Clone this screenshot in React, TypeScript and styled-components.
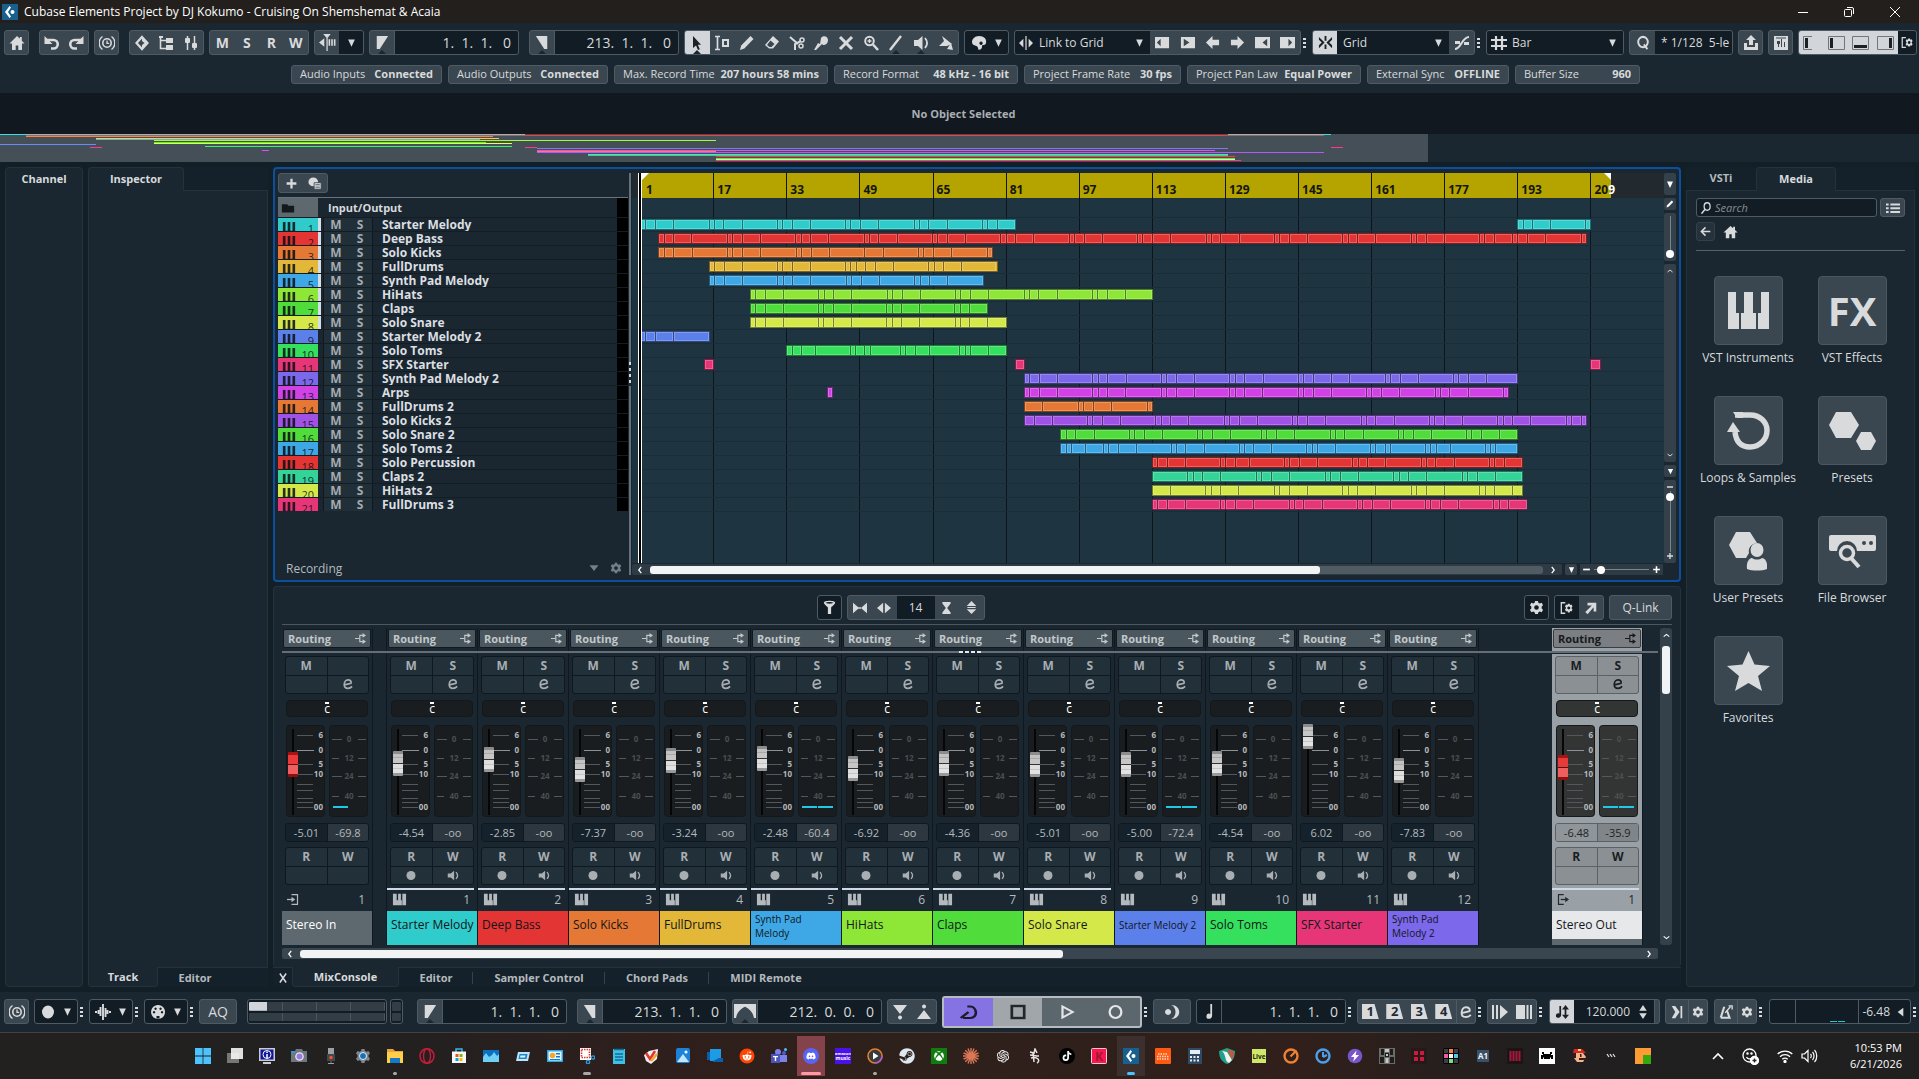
import React, { useState } from "react";
import styled, { createGlobalStyle, css } from "styled-components";
import { FaRedditAlien, FaDiscord, FaSteam, FaXbox, FaTiktok } from "react-icons/fa";
import { AiOutlineOpenAI } from "react-icons/ai";

const c = {
  panel: "#1a2731",
  deep: "#131f27",
  ink: "#121c24",
  button: "#3b4750",
  edge: "#4f5b64",
  line: "#24323b",
  text: "#d8dadc",
  soft: "#b4b9bd",
  white: "#f2f3f4",
  lit: "#d2d6da",
};
const sans = '"Open Sans", "Noto Sans", "Liberation Sans", sans-serif';

const Global = createGlobalStyle`
  * { box-sizing: border-box; }
  body { margin: 0; background: ${c.deep}; font-family: ${sans}; font-size: 12px; color: ${c.text}; overflow: hidden; }
  button, input, select { font-family: inherit; font-size: inherit; color: inherit; margin: 0; padding: 0; border: 0; background: none; border-radius: 0; outline: none; }
  h1, h2, p, ul { margin: 0; padding: 0; font-size: inherit; font-weight: inherit; list-style: none; }
`;

/* ---------- icons ---------- */
const stroke = { fill: "none", stroke: "currentColor", strokeWidth: 2 } as const;
const shapes: Record<string, React.ReactNode> = {
  home: <path d="M8 1L0.500 8.500h2.500V15h3.700v-4.500h2.600V15H13V8.500h2.500L12.800 5.800V2h-2v1.800z" />,
  undo: <><path d="M3 5h6.500a4 4 0 0 1 0 8.500H7" {...stroke} strokeWidth="2.600" /><path d="M0.500 1v8h8z" /></>,
  redo: <><path d="M13 5H6.500a4 4 0 0 0 0 8.500H9" {...stroke} strokeWidth="2.600" /><path d="M15.500 1v8h-8z" /></>,
  clock: <><circle cx="8" cy="8" r="4.200" {...stroke} strokeWidth="1.600" /><path d="M8 5.500V8.300h2.200" {...stroke} strokeWidth="1.300" /><path d="M3.500 1.500a8 8 0 0 0 0 13M12.500 1.500a8 8 0 0 1 0 13" {...stroke} strokeWidth="1.500" /></>,
  diamond: <><path d="M8 2l5.500 6L8 14 2.500 8z" {...stroke} strokeWidth="2.200" /><path d="M8 2v4l2.500 2L8 10v4l6-6z" /></>,
  tree: <><path d="M2.500 1v12.500H8M2.500 5.500H8" {...stroke} strokeWidth="1.600" /><path d="M8 3h7v5H8zM8 10h7v5H8zM1 1h4v2H1z" /></>,
  mixer: <><path d="M4.500 1v14M11.500 1v14" {...stroke} strokeWidth="1.500" /><rect x="2" y="3" width="5" height="5" rx="1" /><rect x="9" y="8" width="5" height="5" rx="1" /></>,
  autoscroll: <><path d="M0 8l5-4v8zM9 5h1.500v6H9zM11.500 5H13v6h-1.500zM14 5h1.500v6H14zM4 0h7L8.200 3.500V16H7V3.500z" /></>,
  locL: <path d="M2 1h13L5.500 15H2z" />,
  locR: <path d="M14 1H1l9.500 14H14z" />,
  range: <path d="M0 0h16v15h-1.500C14 9 11 5 8 3 5 5 2 9 1.500 15H0z" />,
  arrow: <path d="M4 1v12l3-2.500L9 15l1.800-.8-2-4.500H12z" />,
  rangesel: <><path d="M1 1.500h5M1 14.500h5M3.500 1v14" {...stroke} strokeWidth="1.700" /><path d="M8 4h7v8H8zM10 6v4h3V6z" fillRule="evenodd" /></>,
  pencil: <path d="M1 15l1.200-4.500L11.500 1l3 3L5.300 13.500z" />,
  eraser: <path d="M9 1l6 5.500-6 7H5L1 10zM6.500 5.500L3 10l2.500 2h2l3-3z" fillRule="evenodd" />,
  scissors: <><path d="M1 2l8 7M6 15V9l6-3" {...stroke} /><circle cx="13" cy="5" r="2" {...stroke} strokeWidth="1.500" /><circle cx="12" cy="11" r="2" {...stroke} strokeWidth="1.500" /></>,
  glue: <path d="M8 3c2-3 7-2 7 2 0 3-2 5-5 5l-1-1-6 6H1l4-7 2 1z" />,
  mute: <path d="M2 2l12 12M14 2L2 14" {...stroke} strokeWidth="3" />,
  zoom: <><circle cx="6.500" cy="6" r="4.300" {...stroke} /><path d="M10 9.500l5 5.500" {...stroke} strokeWidth="2.600" /><path d="M4.500 6h4M6.500 4v4" {...stroke} strokeWidth="1.400" /></>,
  lineTool: <path d="M2 15L13 1" {...stroke} strokeWidth="2.400" />,
  speaker: <><path d="M1 5h4l4.500-4v14L5 11H1z" /><path d="M12 3c2.500 3 2.500 7 0 10" {...stroke} strokeWidth="1.800" /></>,
  bucket: <><path d="M4 1l10 8-5 2H1l5-5z" /><path d="M13 8l2 7-6-1z" /></>,
  palette: <path d="M8 1c5 0 8 3 7 7-.5 2-2 2-3 2s-1 1-1 2c0 2-2 3-4 2.500.5-1 0-2.500-1.500-3.500C2 10 1 9 1 7c0-3 3-6 7-6zM10 6.500a1.700 1.700 0 1 0 .1 0z" fillRule="evenodd" />,
  down: <path d="M2 2.500h12L8 14z" />,
  snapLink: <path d="M0 8l5-5v10zM16 8l-5-5v10zM7.300 0h1.400v16H7.300z" />,
  nudge1: <path d="M0 2h15v12H0zM6 4L2 8l4 4z" fillRule="evenodd" />,
  nudge2: <path d="M1 2h15v12H1zM4 4v8l6-4z" fillRule="evenodd" />,
  left: <path d="M8 1v4h7v6H8v4L1 8z" />,
  right: <path d="M8 1v4H1v6h7v4l7-7z" />,
  nudge3: <path d="M0 2h16v12H0zM13 4L8 8l5 4z" fillRule="evenodd" />,
  nudge4: <path d="M0 2h16v12H0zM9 4v8l4-4z" fillRule="evenodd" />,
  snap: <path d="M7 1h2v5H7zM7 10h2v5H7zM1 2l6 6-6 6V11l3-3-3-3zM15 2L9 8l6 6V11l-3-3 3-3z" />,
  curve: <><path d="M1 14c6 0 7-12 14-12" {...stroke} /><path d="M1 6h5v3H1zM10 7h5v3h-5z" /></>,
  hash: <path d="M5 1v14M11 1v14M0 5h16M0 11h16" {...stroke} strokeWidth="2.200" />,
  Q: <><circle cx="8" cy="7.500" r="5.500" {...stroke} strokeWidth="2.200" /><path d="M9 10l4 5" {...stroke} strokeWidth="2.200" /></>,
  share: <path d="M8 0l5 5h-3v5H6V5H3zM1 8h3v4h8V8h3v7H1z" />,
  mixwin: <path d="M1 1h14v14H1zM4 6v3h1v3h1V9h1V6zM8 4v8h1V4zM11 7v5h1V7zM3 2.500v1h10v-1z" fillRule="evenodd" />,
  gear: <path fillRule="evenodd" d="M6.500 1h3l.5 2 1.500.8 2-.8 1.500 2.500L13.500 7v2l1.500 1.500-1.500 2.500-2-.8-1.500.8-.5 2h-3L6 13l-1.500-.8-2 .8L1 10.500 2.500 9V7L1 5.500 2.500 3l2 .8L6 3zM8 5.500A2.500 2.500 0 1 0 8 10.500 2.500 2.500 0 1 0 8 5.500z" />,
  setup: <><path d="M6 2H1.500v12H6" {...stroke} strokeWidth="1.500" /><path fillRule="evenodd" d="M9 3h2l.5 1.500L13 4l1.300 2-1 1.300v1.400l1 1.300L13 12l-1.500-.5L11 13H9l-.5-1.500L7 12l-1.300-2 1-1.300V7.300l-1-1.300L7 4l1.500.5zM10 6.300a1.700 1.700 0 1 0 .1 0z" /></>,
  plus: <path d="M8 2v12M2 8h12" {...stroke} strokeWidth="2.800" />,
  minus: <path d="M2 8h12" {...stroke} strokeWidth="3" />,
  preset: <><circle cx="6" cy="6" r="5.500" /><path d="M7 7h8v8H7z" stroke="#3b4750" /><path d="M8.500 9.500h5M8.500 12.500h5" stroke="#3b4750" /></>,
  folder: <path d="M1 3h6l1.500 2H15v9H1z" />,
  keys: <path d="M1 1h4v8h1v6H1zM6.500 1h3v8h1v6h-5V9h1zM11 1h4v14h-4V9z" />,
  keysDark: <path d="M1 0h3v10h2.500V0h3v10H12V0h3v16H1z" />,
  route: <><path d="M0 8h6M12 3.500H7v9h5" {...stroke} strokeWidth="1.700" /><path d="M11 0v7l5-3.500zM11 9v7l5-3.500z" /></>,
  edit: <path d="M2 9.500l10-2.500c1-2.500-1-4.500-4-4.500S3 5.500 3 9s2.500 4.800 5 4.800 4-1 5.500-2.600" {...stroke} strokeWidth="2.200" />,
  rec: <ellipse cx="8" cy="8" rx="6" ry="6.500" />,
  input: <><path d="M6 2h8v12H6" {...stroke} strokeWidth="1.600" /><path d="M0 8h7" {...stroke} strokeWidth="1.600" /><path d="M6 4.500v7L11 8z" /></>,
  output: <><path d="M9 2H2v12h7" {...stroke} strokeWidth="1.600" /><path d="M5 8h7" {...stroke} strokeWidth="1.600" /><path d="M11 4.500v7L16 8z" /></>,
  filter: <path fillRule="evenodd" d="M1 3c0-3 14-3 14 0 0 1-5 5-5 5v7H6V8S1 4 1 3zM3 3c2 1.200 8 1.200 10 0-2-1-8-1-10 0z" />,
  shrinkH: <path d="M0 1l7 7-7 7zM16 1L9 8l7 7zM6 7h4v2H6z" />,
  growH: <path d="M7 1v14L0 8zM9 1v14l7-7z" />,
  shrinkV: <path d="M2 0h12v2L9 8l5 6v2H2v-2l5-6-5-6z" />,
  growV: <path d="M8 0l7 6H1zM8 16l7-6H1zM2 7.300h12v1.400H2z" />,
  ne: <path d="M4 2h10v10h-3V7l-7 8-2.500-2.500L9 5H4z" />,
  search: <><ellipse cx="9.500" cy="6" rx="4" ry="5" {...stroke} strokeWidth="1.700" /><path d="M6.500 10L2 15.500" {...stroke} /></>,
  list: <path d="M0 2h3v2.500H0zM5 2h11v2.500H5zM0 7h3v2.500H0zM5 7h11v2.500H5zM0 12h3v2.500H0zM5 12h11v2.500H5z" />,
  back: <path d="M8 2L2 8l6 6M2 8h13" {...stroke} strokeWidth="2.200" />,
  chL: <path d="M10 3L6 8l4 5" {...stroke} />,
  chR: <path d="M6 3l4 5-4 5" {...stroke} />,
  chU: <path d="M3 10l5-4 5 4" {...stroke} />,
  chD: <path d="M3 6l5 4 5-4" {...stroke} />,
  close: <path d="M3 2l10 12M13 2L3 14" {...stroke} strokeWidth="2.600" />,
  wave: <path d="M0 8h2M3.500 6v4M5.500 3v9M8 0v16M10.500 4v9M12.500 6v4M14 8h2" {...stroke} strokeWidth="1.900" />,
  midi: <path fillRule="evenodd" d="M8 1a7 7 0 1 0 .1 0zM4 7a1.200 1.200 0 1 0 .1 0zM12 7a1.200 1.200 0 1 0 .1 0zM5.500 3.500a1.200 1.200 0 1 0 .1 0zM10.500 3.500a1.200 1.200 0 1 0 .1 0zM6.500 12h3v2.500h-3z" />,
  punchIn: <path d="M1 1h14L8 10zM8 11.500a2 2 0 1 0 .1 0z" />,
  punchOut: <path d="M1 15h14L8 6zM8 .5a2 2 0 1 0 .1 0z" />,
  loop: <path d="M3.500 14h6c7 0 5.500-11.500 0-11.500H7M1.500 14L8 8" {...stroke} strokeWidth="2.200" />,
  stop: <rect x="2.500" y="2" width="11" height="12" {...stroke} strokeWidth="2.400" />,
  play: <path d="M4 2.500v11L13 8z" {...stroke} />,
  ring: <ellipse cx="8" cy="8" rx="5.500" ry="6" {...stroke} strokeWidth="2.200" />,
  moon: <path d="M7 1c11 0 11 14 0 14 6-2 6-12 0-14zM4 5a3 3 0 1 0 .1 0z" />,
  note: <path d="M9 0h2.200v12.500c0 4-7 4.500-7 1s3-4 4.800-2.800z" />,
  tempo: <path d="M5 1h2v10.500c0 4-6 4-6 1s3-3.500 4-2.500zM12 0l4 5h-3v6h3l-4 5-4-5h3V5H8z" />,
  click: <path d="M2 1h4l5 7-5 7H2l4-7zM12 1h2v14h-2z" />,
  metro: <><path d="M2 14.500h10L9 6M2 14.500L6 2" {...stroke} strokeWidth="2.400" /><path d="M7 9l6-7M11 1h4v4" {...stroke} strokeWidth="1.600" /></>,
  pre: <path d="M0 1h2v14H0zM4 1h2v14H4zM8 1l8 7-8 7z" />,
  count: <path d="M0 1h9v14H0zM10.500 1h2v14h-2zM14 1h2v14h-2z" />,
  updown: <path d="M8 0l6 6.500H2zM8 16l6-6.500H2z" />,
  tri: <path d="M13 1v14L3 8z" />,
};

const Svg = styled.svg<{ $s: number; $h?: number }>`
  width: ${(p) => p.$s}px;
  height: ${(p) => p.$h ?? p.$s}px;
  display: block;
  flex: none;
  fill: currentColor;
`;
const Icon = ({ n, s = 16, h }: { n: string; s?: number; h?: number }) => (
  <Svg $s={s} $h={h} viewBox="0 0 16 16" preserveAspectRatio="none" aria-hidden>
    {shapes[n]}
  </Svg>
);

/* ---------- window frame ---------- */
const App = styled.div`
  min-height: 100vh;
  display: flex;
  flex-direction: column;
`;
const TitleBar = styled.header`
  height: 23px;
  display: flex;
  align-items: center;
  padding: 0 1px 0 2px;
  background: #221f1d;
  color: #fff;
  h1 { flex: 1; padding-left: 6px; font-size: 12px; line-height: 20px; }
`;
const CaptionButton = styled.button`
  width: 46px;
  height: 20px;
  display: grid;
  place-items: center;
`;
const Toolbar = styled.div`
  display: flex;
  align-items: center;
  height: 25px;
  padding-left: 4px;
  white-space: nowrap;
`;
const Group = styled.div<{ $w: number; $ml?: number; $dark?: boolean }>`
  display: flex;
  flex: none;
  width: ${(p) => p.$w}px;
  height: 25px;
  margin-left: ${(p) => p.$ml ?? 5}px;
  border: 1px solid ${c.edge};
  border-radius: 3px;
  overflow: hidden;
  background: ${(p) => (p.$dark ? c.ink : c.button)};
`;
const Tool = styled.button<{ $on?: boolean; $dark?: boolean; $notch?: boolean; $fix?: number }>`
  flex: ${(p) => (p.$fix ? `0 0 ${p.$fix}px` : "1 1 0")};
  min-width: 0;
  position: relative;
  display: flex;
  align-items: center;
  justify-content: center;
  gap: 7px;
  font-size: 14px;
  font-weight: 700;
  color: ${(p) => (p.$on ? "#1b2126" : c.text)};
  background: ${(p) => (p.$on ? c.lit : p.$dark ? c.ink : "transparent")};
  ${(p) =>
    p.$notch &&
    css`
      &::after {
        content: "";
        position: absolute;
        bottom: 0;
        left: calc(50% - 4px);
        border: 4px solid transparent;
        border-top: 0;
        border-bottom-color: ${c.panel};
      }
    `}
`;
const Field = styled.input`
  flex: 1;
  min-width: 0;
  padding-right: 7px;
  background: ${c.ink};
  border-left: 1px solid ${c.edge};
  text-align: right;
  font-size: 14px;
  white-space: pre;
`;
const Pick = styled.select<{ $pad?: number }>`
  flex: 1;
  min-width: 0;
  appearance: none;
  background: ${c.ink};
  padding-left: ${(p) => p.$pad ?? 6}px;
  font-size: 12px;
`;
const PickArrow = styled.span`
  width: 22px;
  display: grid;
  place-items: center;
  background: ${c.ink};
`;
const Dots = styled.span`
  flex: none;
  width: 3px;
  height: 10px;
  margin: 0 1px 0 2px;
  background: repeating-linear-gradient(${c.text} 0 2px, transparent 2px 4px);
`;
const TopZone = styled.section`
  background: ${c.panel};
  padding-top: 7px;
  height: 70px;
`;
const ChipRow = styled.div`
  display: flex;
  justify-content: center;
  gap: 6px;
  margin: 10px 0 0 12px;
`;
const Chip = styled.button<{ $w: number }>`
  width: ${(p) => p.$w}px;
  height: 19px;
  display: flex;
  justify-content: space-between;
  align-items: center;
  padding: 0 8px 1px;
  background: ${c.button};
  border: 1px solid ${c.edge};
  border-radius: 3px;
  font-size: 11px;
  line-height: 16px;
  white-space: nowrap;
`;
const InfoLine = styled.p`
  && { font-size: 11px; font-weight: 700; }
  height: 41px;
  line-height: 42px;
  padding-left: 8px;
  text-align: center;
  background: #11181f;
  color: #a9aeb2;
`;

/* ---------- data ---------- */
type Clip = { start: number; parts: number[] };
type Track = { name: string; color: string; sel?: boolean; clips: Clip[] };
const cyc = (n: number, ...rest: number[]) => [...Array.from({ length: n }, () => [1, 2, 4, 8]).flat(), ...rest];
const one = (start: number, parts: number[]): Clip[] => [{ start, parts }];
const tracks: Track[] = [
  { name: "Starter Melody", color: "#30cccc", sel: true, clips: [{ start: 1, parts: cyc(5, 1, 2, 4) }, { start: 193, parts: cyc(1, 1) }] },
  { name: "Deep Bass", color: "#e43535", sel: true, clips: one(5, cyc(12, 1, 2, 4, 1, 2, 4, 8, 1)) },
  { name: "Solo Kicks", color: "#e67835", sel: true, clips: one(5, cyc(3, 4, 8, 1, 2, 4, 8, 1)) },
  { name: "FullDrums", color: "#e3b839", sel: true, clips: one(16, cyc(2, 1, 1, 2, 2, 4, 8, 1, 2, 4, 8)) },
  { name: "Synth Pad Melody", color: "#3ea8e6", sel: true, clips: one(16, cyc(4)) },
  { name: "HiHats", color: "#8ee636", sel: true, clips: one(25, cyc(5, 1, 2, 4, 6)) },
  { name: "Claps", color: "#50dc3a", sel: true, clips: one(25, cyc(3, 1, 2, 4)) },
  { name: "Solo Snare", color: "#d4e84a", sel: true, clips: one(25, cyc(3, 1, 2, 4, 4)) },
  { name: "Starter Melody 2", color: "#5c80ea", clips: one(1, cyc(1)) },
  { name: "Solo Toms", color: "#34e05e", clips: one(33, [1, 2, 3, 8, 1, 2, 1, 7, 1, 2, 3, 7, 1, 1, 4, 4]) },
  { name: "SFX Starter", color: "#e63678", clips: [{ start: 15, parts: [2] }, { start: 83, parts: [2] }, { start: 209, parts: [2] }] },
  { name: "Synth Pad Melody 2", color: "#7b68ea", clips: one(85, cyc(4, 1, 2, 4, 4, 8, 1, 2, 4, 8, 1, 2, 4, 7)) },
  { name: "Arps", color: "#d042e6", clips: [{ start: 42, parts: [1] }, { start: 85, parts: cyc(7, 1) }] },
  { name: "FullDrums 2", color: "#e67835", clips: one(85, [4, 8, 1, 2, 4, 8, 1]) },
  { name: "Solo Kicks 2", color: "#a052e6", clips: one(85, [2, 4, 8, ...cyc(7, 1, 2, 1)]) },
  { name: "Solo Snare 2", color: "#50dc3a", clips: one(93, cyc(2, 1, 2, 4, 7, ...cyc(3, 1, 2, 4, 4))) },
  { name: "Solo Toms 2", color: "#3ea8e6", clips: one(93, [1, 1, 3, 4, ...cyc(3), 1, 1, 4, 8, 1, 2, 1, 8, 1, 1, 3, 8, 1, 1, 5]) },
  { name: "Solo Percussion", color: "#e43535", clips: one(113, cyc(1, 1, 2, 3, 8, ...cyc(3, 1, 2, 4))) },
  { name: "Claps 2", color: "#34d498", clips: one(113, [8, ...cyc(4, 1, 2, 4, 6)]) },
  { name: "HiHats 2", color: "#d4e84a", clips: one(113, [4, 8, ...cyc(4, 1, 2, 4, 2)]) },
  { name: "FullDrums 3", color: "#e63678", clips: one(113, cyc(5, 1, 2, 4)) },
];
const total = (p: number[]) => p.reduce((a, b) => a + b, 0);
const FIRST = 1.4;
const SPAN = 223.7;
const at = (bar: number) => `${((bar - FIRST) / SPAN) * 100}%`;
const len = (bars: number) => `${(bars / SPAN) * 100}%`;

/* ---------- overview ---------- */
const Overview = styled.div`
  position: relative;
  height: 28px;
  background: ${c.panel};
  overflow: hidden;
`;
const OverviewRange = styled.div`
  width: 74.4%;
  height: 28px;
  background: #444f57;
`;
const OverviewLine = styled.i`
  position: absolute;
  height: 1px;
  filter: brightness(1.1);
`;

/* ---------- workspace ---------- */
const Workspace = styled.main`
  flex: 1;
  display: grid;
  grid-template-columns: 78px 180px minmax(0, 1fr) 229px;
  gap: 5px;
  padding: 5px 4px 5px 5px;
  background: ${c.deep};
`;
const Zone = styled.section`
  display: flex;
  flex-direction: column;
  min-width: 0;
`;
const Panel = styled.div`
  flex: 1;
  background: ${c.panel};
  border: 1px solid ${c.line};
  border-radius: 4px;
`;
const ChannelPanel = styled(Panel)`
  text-align: center;
  font-weight: 700;
  font-size: 11px;
  line-height: 21px;
`;
const ZoneBody = styled.div`
  flex: 1;
  background: ${c.panel};
  border: solid ${c.line};
  border-width: 0 1px;
`;
const Tabs = styled.div<{ $bottom?: boolean }>`
  display: flex;
  height: ${(p) => (p.$bottom ? 20 : 24)}px;
  background: #14212a;
  font-weight: 700;
  font-size: 11px;
`;
const TabRest = styled.span<{ $bottom?: boolean }>`
  flex: 1;
  border-${(p) => (p.$bottom ? "top" : "bottom")}: 1px solid ${c.line};
`;
const Tab = styled.button<{ $on?: boolean; $bottom?: boolean; $w: number; $sep?: boolean }>`
  width: ${(p) => p.$w}px;
  flex: none;
  font-weight: 700;
  padding-bottom: ${(p) => (p.$bottom ? 0 : 2)}px;
  color: ${(p) => (p.$on ? c.text : c.soft)};
  ${(p) =>
    p.$on
      ? css`
          background: ${c.panel};
          border: 1px solid ${c.line};
          border-${p.$bottom ? "top" : "bottom"}: 0;
          border-radius: ${p.$bottom ? "0 0 4px 4px" : "4px 4px 0 0"};
        `
      : css`border-${p.$bottom ? "top" : "bottom"}: 1px solid ${c.line};`}
  ${(p) => p.$sep && css`background: linear-gradient(#35424b, #35424b) right 4px / 1px 12px no-repeat;`}
`;

/* ---------- project window ---------- */
const Project = styled.section`
  flex: 1;
  display: flex;
  min-height: 0;
  padding: 4px 3px 5px 3px;
  border: 2px solid #0b4f9e;
  border-radius: 4px;
  background: ${c.panel};
`;
const TrackList = styled.div`
  width: 350px;
  flex: none;
  display: flex;
  flex-direction: column;
`;
const AddGroup = styled.div`
  display: flex;
  width: 50px;
  height: 20px;
  margin-bottom: 4px;
  background: ${c.button};
  border: 1px solid ${c.edge};
  border-radius: 3px;
`;
const FolderRow = styled.div`
  display: flex;
  align-items: center;
  height: 20px;
  border-top: 1px solid #6a737b;
  font-weight: 700;
  font-size: 11px;
  background: linear-gradient(#000, #000) right / 11px 100% no-repeat;
`;
const FolderCell = styled.span`
  width: 40px;
  height: 19px;
  margin-right: 10px;
  padding: 4px 3px;
  background: #5d686f;
  color: #14191c;
`;
const Row = styled.li`
  display: flex;
  height: 14px;
  border-top: 1px solid #121d24;
  overflow: hidden;
  background: linear-gradient(#000, #000) right / 11px 100% no-repeat;
`;
const ColorCell = styled.span<{ $c: string; $sel?: boolean }>`
  width: 46px;
  flex: none;
  display: flex;
  justify-content: space-between;
  padding: 4px 10px 0 4px;
  line-height: 13px;
  font-size: 11px;
  color: rgba(10, 14, 18, 0.85);
  background: linear-gradient(90deg, ${(p) => p.$c} 40px, ${(p) => (p.$sel ? "#d5dde6" : c.panel)} 40px 43px, ${c.panel} 43px 45px, #0f181e 45px);
`;
const MS = styled.span`
  width: 49px;
  flex: none;
  display: flex;
  background: #212f39;
  border-right: 1px solid #0f181e;
  button { flex: 1; font-weight: 700; font-size: 12px; line-height: 13px; color: #a4aaaf; }
`;
const TrackName = styled.span`
  padding-left: 9px;
  font-weight: 700;
  font-size: 12px;
  line-height: 14px;
  color: #dcdfe1;
`;
const ListFoot = styled.div`
  margin-top: auto;
  display: flex;
  align-items: center;
  gap: 10px;
  height: 14px;
  padding: 0 6px 0 8px;
  color: #747f87;
  span { flex: 1; color: ${c.soft}; font-size: 12px; }
`;
const Splitter = styled.div`
  width: 2px;
  margin: 0 1px;
  background:
    repeating-linear-gradient(#d8dadc 0 3px, ${c.panel} 3px 6px) 0 189px / 100% 24px no-repeat,
    #66707a;
`;
const Timeline = styled.div`
  flex: 1;
  min-width: 0;
  display: flex;
  flex-direction: column;
`;
const TimeMain = styled.div`
  flex: 1;
  display: flex;
`;
const Gutter = styled.div`
  width: 6px;
  background: linear-gradient(#22292f 25px, #1e3340 25px);
`;
const Cursor = styled.div`
  width: 4px;
  background: #000;
  border: solid #fff;
  border-width: 0 1px;
`;
const TimeCanvas = styled.div`
  flex: 1;
  min-width: 0;
  position: relative;
  overflow: hidden;
  background: #1f3441;
`;
const Ruler = styled.div`
  height: 25px;
  background: #22292f;
`;
const RulerRange = styled.div`
  position: relative;
  height: 25px;
  background: #b5a400;
  &::before, &::after { content: ""; position: absolute; top: 0; border-top: 7px solid #fff; }
  &::before { left: 0; border-right: 7px solid transparent; }
  &::after { right: 0; border-left: 7px solid transparent; }
`;
const BarLine = styled.i`
  position: absolute;
  top: 0;
  bottom: 0;
  width: 1px;
  background: #0c151b;
`;
const BarLabel = styled.span`
  position: absolute;
  top: 8px;
  padding-left: 4px;
  font-size: 12px;
  line-height: 17px;
  font-weight: 700;
  color: #14160a;
  em { font-style: normal; color: #fff; }
`;
const Lane = styled.div`
  position: relative;
  height: 14px;
  border-top: 1px solid #1a2c37;
  &:last-of-type { border-bottom: 1px solid #1a2c37; height: 15px; }
`;
const FolderLane = styled.div`
  height: 19px;
`;
const ClipBox = styled.div<{ $c: string }>`
  position: absolute;
  top: 1px;
  height: 11px;
  display: flex;
  background: ${(p) => p.$c};
  border: solid color-mix(in srgb, ${(p) => p.$c} 55%, #000);
  border-width: 1px 1px 1px 0;
  --rim: color-mix(in srgb, ${(p) => p.$c} 55%, #000);
  --hi: color-mix(in srgb, ${(p) => p.$c} 78%, #fff);
`;
const Part = styled.span`
  min-width: 0;
  border-left: 1px solid var(--rim);
  box-shadow: inset 0 0 0 1px var(--hi);
`;
const SideTools = styled.div`
  width: 12px;
  display: flex;
  flex-direction: column;
  gap: 3px;
`;
const Side = styled.div<{ $h?: number }>`
  ${(p) => (p.$h ? `height: ${p.$h}px;` : "flex: 1;")}
  display: flex;
  flex-direction: column;
  align-items: center;
  justify-content: space-between;
  padding: 3px 0;
  border-radius: 2px;
  background: #34414a;
`;
const SideButton = styled.button<{ $h: number }>`
  height: ${(p) => p.$h}px;
  display: grid;
  place-items: center;
  background: #34414a;
  border-radius: 2px;
  color: #fff;
`;
const VZoom = styled.input`
  writing-mode: vertical-lr;
  direction: rtl;
  appearance: none;
  flex: 1;
  min-height: 0;
  width: 8px;
  background: linear-gradient(#7b858c, #7b858c) center / 1px 100% no-repeat;
  &::-webkit-slider-thumb { appearance: none; width: 8px; height: 8px; border-radius: 50%; background: #fff; }
`;
const HZoom = styled.input`
  appearance: none;
  flex: 1;
  min-width: 0;
  height: 8px;
  background: linear-gradient(#7b858c, #7b858c) center / 100% 1px no-repeat;
  &::-webkit-slider-thumb { appearance: none; width: 8px; height: 8px; border-radius: 50%; background: #fff; }
`;
const HBarRow = styled.div`
  display: flex;
  gap: 3px;
  height: 11px;
  margin-top: 1px;
`;
const HBar = styled.div`
  flex: 1;
  display: flex;
  align-items: center;
  gap: 5px;
  padding: 0 4px 0 3px;
  border-radius: 2px;
  background: #2f3b44;
  color: #fff;
`;
const Trough = styled.div<{ $plain?: boolean }>`
  flex: 1;
  height: 8px;
  border-radius: 3px;
  background: ${(p) => (p.$plain ? "none" : "#505b63")};
`;
const Thumb = styled.div<{ $pct: number }>`
  width: ${(p) => p.$pct}%;
  height: 8px;
  border-radius: 3px;
  background: ${c.white};
`;
const ScrollMenu = styled(SideButton)`
  width: 12px;
`;
const HZoomBox = styled.div`
  width: 83px;
  display: flex;
  align-items: center;
  gap: 3px;
  padding: 0 2px;
  background: #2f3b44;
  color: #fff;
`;
const ZoomEnd = styled.span`
  width: 10px;
`;

/* ---------- mix console ---------- */
const Console = styled.section`
  margin-top: 4px;
  padding: 8px 8px 8px 8px;
  background: ${c.panel};
  border: 1px solid ${c.line};
  border-bottom: 0;
  border-radius: 4px;
`;
const ConsoleHead = styled.div`
  display: grid;
  grid-template-columns: 1fr auto 1fr auto;
  padding-bottom: 4px;
  border-bottom: 1px solid #4c5860;
`;
const HeadPart = styled.div`
  display: flex;
`;
const TextButton = styled.button`
  width: 63px;
  height: 25px;
  margin-left: 5px;
  border: 1px solid ${c.edge};
  border-radius: 3px;
  background: ${c.button};
  font-size: 12px;
`;
const Count = styled.input`
  width: 38px;
  background: ${c.ink};
  text-align: center;
  font-size: 12px;
`;
const ConsoleMain = styled.div`
  display: flex;
  gap: 2px;
  margin-top: 3px;
`;
const Strips = styled.div`
  flex: 1;
  min-width: 0;
`;
const StripRow = styled.div`
  display: flex;
`;
const Slot = styled.div<{ $kind: "in" | "ch" | "out" }>`
  width: 91px;
  flex: none;
  border-right: 1px solid #0f181e;
  ${(p) => p.$kind === "in" && css`margin-right: 13px;`}
  ${(p) =>
    p.$kind === "out" &&
    css`
      margin: 0 15px 0 auto;
      background: #9aa1a6;
      color: #22282c;
    `}
`;
const FirstSep = styled.i`
  width: 1px;
  background: #0f181e;
`;
const RouteButton = styled.button<{ $out: boolean }>`
  display: flex;
  align-items: center;
  justify-content: space-between;
  width: 88px;
  height: 19px;
  margin: 1px 1px 3px;
  padding: 0 4px;
  border: 1px solid ${(p) => (p.$out ? "#3a3d40" : "#11191f")};
  border-radius: 2px;
  background: ${(p) => (p.$out ? "#7b7f83" : "#4b575e")};
  color: ${(p) => (p.$out ? "#16191b" : "#c3c8cb")};
  font-size: 11px;
  font-weight: 700;
`;
const Divider = styled.div`
  height: 3px;
  border-bottom: 1px solid ${c.panel};
  background:
    repeating-linear-gradient(90deg, #e6e8ea 0 4px, ${c.panel} 4px 6px) 50% 0 / 22px 2px no-repeat,
    #656e77;
`;
const StripBody = styled.div`
  padding-top: 2px;
`;
const Cells = styled.div<{ $out: boolean }>`
  display: grid;
  grid-template-columns: 1fr 1fr;
  grid-template-rows: 1fr 1fr;
  gap: 1px;
  height: 38px;
  margin: 0 3px;
  border: 1px solid ${(p) => (p.$out ? "#5c6165" : "#0f181e")};
  border-radius: 3px;
  overflow: hidden;
  background: ${(p) => (p.$out ? "#5c6165" : "#0f181e")};
  button {
    display: grid;
    place-items: center;
    background: ${(p) => (p.$out ? "#8a9093" : "#22303a")};
    color: ${(p) => (p.$out ? "#1a1d1f" : "#a9aeb2")};
    font-weight: 700;
    font-size: 12px;
    line-height: 16px;
  }
`;
const Pan = styled.button<{ $out: boolean }>`
  display: block;
  position: relative;
  width: 82px;
  height: 17px;
  margin: 6px 4px 7px;
  border: 1px solid #14181b;
  border-radius: 4px;
  background: ${(p) => (p.$out ? "#333535" : "#191d20")};
  color: #fff;
  font-size: 12px;
  line-height: 15px;
  &::before { content: ""; position: absolute; left: 38px; top: 1px; width: 4px; height: 2px; background: #fff; }
`;
const FaderArea = styled.div`
  position: relative;
  height: 94px;
  padding: 0 4px;
  svg { display: block; }
`;
const Fader = styled.input<{ $red: boolean }>`
  position: absolute;
  left: 6px;
  top: 0;
  width: 10px;
  height: 94px;
  writing-mode: vertical-lr;
  direction: rtl;
  appearance: none;
  &::-webkit-slider-thumb {
    appearance: none;
    width: 10px;
    height: 25px;
    border-radius: 1px;
    background: ${(p) =>
      p.$red
        ? "linear-gradient(#a41414 0 3px, #e83a3a 3px 12px, #5a1010 12px 13px, #ee5f5f 13px 22px, #8e1010 22px)"
        : "linear-gradient(#8c8c8c 0 3px, #c2c2c2 3px 6px, #a9a9a9 6px 7px, #c6c6c6 7px 12px, #333 12px 13px, #dedede 13px 17px, #c4c4c4 17px 18px, #e2e2e2 18px 22px, #999 22px)"};
  }
`;
const GaugeText = styled.text`
  font-family: ${sans};
  font-size: 8px;
  font-weight: 700;
`;
const Values = styled.div<{ $out: boolean }>`
  display: grid;
  grid-template-columns: 1fr 1fr;
  height: 19px;
  margin: 5px 3px;
  border: 1px solid ${(p) => (p.$out ? "#5c6165" : "#0f181e")};
  border-radius: 3px;
  overflow: hidden;
  color: ${(p) => (p.$out ? "#1f2326" : c.soft)};
  input { min-width: 0; width: 100%; text-align: center; font-size: 11px; background: ${(p) => (p.$out ? "#8f9599" : "#16222b")}; }
  input + input { background: ${(p) => (p.$out ? "#7f8589" : "#2c3740")}; border-left: 1px solid ${(p) => (p.$out ? "#5c6165" : "#0f181e")}; }
`;
const Rail = styled.div<{ $on: boolean }>`
  height: 2px;
  margin: 3px 3px 0 0;
  background: ${(p) => (p.$on ? "#cfd8e6" : "transparent")};
`;
const KindRow = styled.div<{ $out: boolean }>`
  display: flex;
  align-items: center;
  justify-content: space-between;
  height: 21px;
  padding: 0 7px 2px 5px;
  font-size: 12px;
  color: ${(p) => (p.$out ? "#24292d" : c.soft)};
`;
const NamePlate = styled.button<{ $c: string; $light?: boolean; $small?: boolean; $wrap?: boolean }>`
  display: block;
  width: 90px;
  height: 34px;
  padding: 0 ${(p) => (p.$wrap ? 30 : 0)}px ${(p) => (p.$wrap ? 4 : 6)}px 4px;
  overflow: hidden;
  background: ${(p) => p.$c};
  color: ${(p) => (p.$light ? "#fff" : "#12161a")};
  text-align: left;
  white-space: ${(p) => (p.$wrap ? "normal" : "nowrap")};
  font-size: ${(p) => (p.$small ? 10 : 12)}px;
  line-height: ${(p) => (p.$wrap ? 14 : 28)}px;
`;
const VBar = styled.div`
  width: 12px;
  display: flex;
  flex-direction: column;
  align-items: center;
  justify-content: space-between;
  padding: 3px 0;
  margin-bottom: 14px;
  border-radius: 3px;
  background: #34414a;
  color: #fff;
`;
const VTrough = styled.div`
  flex: 1;
  margin-top: 6px;
`;
const VThumb = styled.div`
  width: 8px;
  height: 48px;
  border-radius: 3px;
  background: ${c.white};
`;
const ConsoleScroll = styled(HBar)`
  flex: none;
  height: 11px;
  margin-top: 3px;
  background: #3a464f;
`;
const TabClose = styled.button`
  width: 19px;
  display: grid;
  place-items: center;
  border-top: 1px solid ${c.line};
`;

/* ---------- media zone ---------- */
const MediaBody = styled(ZoneBody)`
  padding: 7px 9px;
  border-width: 0 1px 1px;
  border-radius: 0 0 4px 4px;
`;
const SearchRow = styled.div`
  display: flex;
  gap: 3px;
`;
const SearchBox = styled.label`
  flex: 1;
  display: flex;
  align-items: center;
  gap: 3px;
  height: 19px;
  padding-left: 3px;
  border: 1px solid ${c.edge};
  border-radius: 3px;
  background: ${c.ink};
  input { flex: 1; min-width: 0; font-size: 11px; font-style: italic; }
  input::placeholder { color: #858c91; }
`;
const ListButton = styled.button`
  width: 25px;
  height: 19px;
  display: grid;
  place-items: center;
  border: 1px solid ${c.edge};
  border-radius: 3px;
  background: ${c.button};
`;
const CrumbRow = styled.div`
  display: flex;
  gap: 8px;
  align-items: center;
  margin-top: 5px;
  padding-bottom: 9px;
  border-bottom: 1px solid #56616a;
`;
const BackButton = styled.button`
  width: 19px;
  height: 19px;
  display: grid;
  place-items: center;
  border-radius: 3px;
  background: #25323c;
  border: 1px solid #33404a;
`;
const Tiles = styled.ul`
  display: grid;
  grid-template-columns: 104px 104px;
  margin-top: 25px;
`;
const Tile = styled.li`
  height: 120px;
  display: flex;
  flex-direction: column;
  align-items: center;
  gap: 4px;
  font-size: 12px;
  line-height: 18px;
  white-space: nowrap;
`;
const TileButton = styled.button`
  width: 69px;
  height: 69px;
  display: grid;
  place-items: center;
  border: 1px solid #4a5660;
  border-radius: 4px;
  background: ${c.button};
  color: ${c.text};
`;
const FX = styled.span`
  font-size: 40px;
  line-height: 60px;
  font-weight: 700;
`;

/* ---------- transport ---------- */
const Transport = styled.section`
  display: flex;
  align-items: center;
  height: 40px;
  padding: 0 0 1px 4px;
  background: ${c.panel};
`;
const MeterBox = styled(Group)`
  flex-direction: column;
  padding: 2px 1px;
  gap: 2px;
  background: ${c.ink};
`;
const MeterRow = styled.div<{ $fill?: number }>`
  flex: 1;
  border-radius: 1px;
  background:
    linear-gradient(${c.lit}, ${c.lit}) 0 / ${(p) => p.$fill ?? 0}px 100% no-repeat,
    repeating-linear-gradient(90deg, #323d46 0 33px, #4a555d 33px 34px);
`;
const Playback = styled.div`
  display: flex;
  width: 200px;
  height: 32px;
  margin-left: 5px;
  border: 2px solid #b6bcc0;
  border-radius: 3px;
  background: #5b666d;
  overflow: hidden;
`;
const PlayButton = styled.button<{ $bg?: string; $fg?: string }>`
  flex: 1;
  display: grid;
  place-items: center;
  background: ${(p) => p.$bg ?? "transparent"};
  color: ${(p) => p.$fg ?? "#e3e5e6"};
`;
const Marker = styled.button`
  flex: 1;
  display: grid;
  place-items: center;
  position: relative;
  span {
    width: 17px;
    height: 15px;
    line-height: 15px;
    clip-path: polygon(0 0, 75% 0, 100% 100%, 0 100%);
    background: ${c.text};
    color: #222b32;
    font-weight: 700;
    font-size: 13px;
    text-align: center;
  }
`;
const Seam = styled.i`
  width: 1px;
  background: ${c.edge};
`;
const OutLevel = styled.div`
  flex: 1;
  display: flex;
  align-items: center;
  justify-content: flex-end;
  gap: 6px;
  padding-right: 5px;
  font-size: 12px;
  background:
    linear-gradient(${c.edge}, ${c.edge}) 25px 0 / 1px 100% no-repeat,
    linear-gradient(${c.edge}, ${c.edge}) 88px 0 / 1px 100% no-repeat,
    linear-gradient(90deg, #22c4dc 7px, transparent 7px 8px, #22c4dc 8px) 60px 21px / 15px 1px no-repeat;
`;
const AQ = styled.button`
  flex: 1;
  font-size: 14px;
`;
const Tempo = styled.input`
  flex: 1;
  min-width: 0;
  background: ${c.ink};
  text-align: right;
  padding-right: 2px;
  font-size: 12px;
`;
const Pad = styled.span`
  width: 4px;
`;

/* ---------- taskbar ---------- */
const Taskbar = styled.footer`
  height: 47px;
  display: flex;
  align-items: center;
  padding: 0 17px 0 187px;
  border-top: 1px solid #4b3f3c;
  background: linear-gradient(90deg, #222120 0, #232020 22%, #2f1f1c 34%, #2e201b 48%, #301f1b 68%, #211f1f 80%, #202020 100%);
`;
const TaskItem = styled.button<{ $bg?: string; $mark?: string; $wide?: boolean; $long?: boolean }>`
  width: 32px;
  height: 40px;
  flex: none;
  display: grid;
  place-items: center;
  position: relative;
  svg { width: 16px; height: 16px; display: block; }
  svg svg { width: 10px; height: 10px; }
  ${(p) =>
    p.$bg &&
    css`
      background: linear-gradient(${p.$bg}, ${p.$bg}) center / 28px 40px no-repeat;
    `}
  ${(p) =>
    p.$mark &&
    css`
      &::after {
        content: "";
        position: absolute;
        bottom: 1px;
        left: calc(50% - ${p.$long ? 10 : p.$wide ? 4 : 2}px);
        width: ${p.$long ? 20 : p.$wide ? 8 : 4}px;
        height: 3px;
        border-radius: 2px;
        background: ${p.$mark};
      }
    `}
`;
const Tray = styled.div`
  margin-left: auto;
  display: flex;
  align-items: center;
  gap: 18px;
  color: #fff;
  p { padding-left: 14px; text-align: right; font-size: 11px; line-height: 16px; }
`;
const TrayPair = styled.span`
  display: flex;
  gap: 8px;
`;
const IconText = styled.text`
  font-family: ${sans};
  font-weight: 700;
`;

const V = ({ children }: { children: React.ReactNode }) => <svg viewBox="0 0 16 16">{children}</svg>;
const CubaseMark = () => (
  <V>
    <rect width="16" height="16" fill="#17608f" />
    <path d="M7.500 2L3 8l4.500 6 1.500-1.500L6 8l3-4.500z" fill="#fff" />
    <circle cx="10.500" cy="8" r="2" fill="#fff" />
  </V>
);
type Task = { n: string; i: React.ReactNode; bg?: string; mark?: string; wide?: boolean; long?: boolean };
const tasks: Task[] = [
  { n: "Start", i: <V><path fill="#4cc2ff" d="M0 0h7.600v7.600H0zM8.400 0H16v7.600H8.400zM0 8.400h7.600V16H0zM8.400 8.400H16V16H8.400z" /></V> },
  { n: "Task View", i: <V><path fill="#777" d="M0 5h12v10H0z" /><path fill="#f4f4f4" d="M4 0h12v11H4z" opacity=".9" /></V> },
  { n: "System Info", i: <V><path fill="#c9ccd0" d="M0 0h16v13H0zM4 14h8v2H4z" /><path fill="#10189a" d="M1.500 1.500h13v10h-13z" /><circle cx="8" cy="6.500" r="4" fill="none" stroke="#fff" /><path d="M7.300 3.500h1.500v1.500H7.300zM7.300 6h1.500v4H7.300z" fill="#fff" /></V> },
  { n: "Camera", i: <V><path fill="#6f767c" d="M0 3h4l1-2h6l1 2h4v11H0z" /><path fill="#1ba1d8" d="M0 3h4v2H0z" /><circle cx="8.500" cy="8.500" r="4.300" fill="#e9e6f2" /><circle cx="8.500" cy="8.500" r="3" fill="#9a7be0" /></V> },
  { n: "Recorder", i: <V><path fill="#9ba1a6" d="M5 0h6v12H5z" /><path fill="#44494d" d="M4 6h8v7H4zM7 13h2v2H7z" /><circle cx="8" cy="9.500" r="1.700" fill="#f2552c" /><path fill="#9ba1a6" d="M5 15h6v1H5z" /></V> },
  { n: "Settings", i: <V><g fill="#7c8790">{shapes.gear}</g><circle cx="8" cy="8" r="3.500" fill="#1470b8" stroke="#e8ecef" /></V> },
  { n: "Explorer", mark: "#a9a9a9", i: <V><path fill="#e8a33d" d="M0 1h6l2 2h8v4H0z" /><path fill="#ffcf48" d="M0 4h16v11H0z" /><path fill="#1679c7" d="M3 10h10v5H3z" /></V> },
  { n: "Opera", i: <V><ellipse cx="8" cy="8" rx="7" ry="7.300" fill="none" stroke="#c21c3c" strokeWidth="1.600" /><ellipse cx="8" cy="8" rx="3.500" ry="7.300" fill="none" stroke="#c21c3c" strokeWidth="1.400" /></V> },
  { n: "Store", i: <V><path d="M5 4V1h6v3" fill="none" stroke="#35b7e8" strokeWidth="1.500" /><path fill="#f6f6f6" d="M1 3.500h14V15H1z" /><path fill="#f25022" d="M4.500 6H7.500v3h-3z" /><path fill="#7fba00" d="M8.500 6h3v3h-3z" /><path fill="#00a4ef" d="M4.500 10h3v3h-3z" /><path fill="#ffb900" d="M8.500 10h3v3h-3z" /></V> },
  { n: "Monitor", i: <V><path fill="#0d6fc0" d="M0 2h16v12H0z" /><path fill="#6fd0f5" d="M0 9l3-4 3 4 3-2 2-3 3 4 2-2v8H0z" /></V> },
  { n: "Run", i: <V><path fill="#bde6fa" d="M3 4h12l-2 9H1z" /><path fill="#1b86c9" d="M4.500 6h8l-1 5h-8z" /><path fill="#e9f7fd" d="M5.500 7.500h5l-.5 2H5z" /></V> },
  { n: "Control Panel", i: <V><path fill="#2aa8e8" d="M0 2h16v12H0z" /><path fill="#eaf7fd" d="M1.500 3.500h13v9h-13z" /><circle cx="5.500" cy="7.500" r="2.800" fill="#f0a830" /><path fill="#1c76c0" d="M9 5h4v1.500H9zM9 8h4v1.500H9zM3 11h10v1H3z" /></V> },
  { n: "Snipping Tool", mark: "#a9a9a9", wide: true, i: <V><path fill="#fff" d="M1 0h11v12H1z" /><path d="M2.500 1.500h8v8h-8z" fill="none" stroke="#d9382c" strokeWidth="1.600" strokeDasharray="1.500 1" /><circle cx="9" cy="14" r="1.700" fill="none" stroke="#2a9ddb" strokeWidth="1.300" /><circle cx="14" cy="9.500" r="1.700" fill="none" stroke="#2a9ddb" strokeWidth="1.300" /></V> },
  { n: "Notepad", i: <V><path fill="#43bfe4" d="M2 1h12v15H2z" /><path stroke="#0c6f9a" strokeWidth="1.300" d="M4 6h8M4 9h8M4 12h8M3 1.500h10" /></V> },
  { n: "Checks", i: <V><path d="M1 7l5-4 9-2-1 10-6 5-5-3z" fill="#eceff5" /><path d="M3 5l4 6 5-8" fill="none" stroke="#e5342b" strokeWidth="2.500" /><path d="M8 13l6-7" stroke="#f4a52c" strokeWidth="2.500" /></V> },
  { n: "Photos", i: <V><rect x="1" width="14" height="15" rx="2" fill="#1c82d8" /><path d="M2 14l6-8 6 8z" fill="#bfe6fb" /><circle cx="11" cy="4" r="1.500" fill="#fff" /></V> },
  { n: "Phone Link", i: <V><path fill="#1d9ce5" d="M3 1h11v12H3z" /><path fill="#0c5ea8" d="M0 4h3v8H0zM12 10h4v4H6v-1z" /></V> },
  { n: "Reddit", i: <V><circle cx="8" cy="8" r="7.500" fill="#ff4500" /><g color="#fff"><FaRedditAlien x="3" y="3" /></g></V> },
  { n: "Teams", i: <V><circle cx="7" cy="4" r="3" fill="#7b83eb" /><circle cx="13" cy="5" r="2" fill="#5059c9" /><path fill="#7b83eb" d="M6 7h10v7H6z" /><path fill="#4b53bc" d="M0 6h9v9H0z" /><path fill="#fff" d="M2 8h5v1.300H5.200V13H3.800V9.300H2z" /><circle cx="14.500" cy="1.500" r="1.500" fill="#4cc2ff" /></V> },
  { n: "Discord", bg: "#84434a", mark: "#ff99a4", long: true, i: <V><circle cx="8" cy="8" r="8" fill="#5865f2" /><g color="#fff"><FaDiscord x="3" y="3" /></g></V> },
  { n: "Amazon Music", i: <V><rect width="16" height="16" fill="#4b12e8" /><IconText x="8" y="7" fontSize="4" fill="#fff" textAnchor="middle">amazon</IconText><IconText x="8" y="12" fontSize="5" fill="#fff" textAnchor="middle">music</IconText></V> },
  { n: "Media Player", mark: "#a9a9a9", i: <V><circle cx="8" cy="8" r="7" fill="#38393d" stroke="#e0812e" strokeWidth="1.600" /><path d="M8 15a7 7 0 0 0 7-7" fill="none" stroke="#a45bd0" strokeWidth="1.600" /><path d="M6 4.500v7L11.500 8z" fill="#fff" /></V> },
  { n: "Steam", i: <FaSteam color="#dfe8f0" /> },
  { n: "Xbox", i: <V><rect width="16" height="16" fill="#107c10" /><g color="#fff"><FaXbox x="3" y="3" /></g></V> },
  { n: "Claude", i: <V><path stroke="#d97757" strokeWidth="1.400" d="M8 0v16M0 8h16M2.300 2.300l11.400 11.400M13.700 2.300L2.300 13.700M5 .6l6 14.800M11 .6L5 15.400M.6 5l14.800 6M.6 11l14.800-6" /></V> },
  { n: "ChatGPT", i: <AiOutlineOpenAI color="#eee" /> },
  { n: "Figure", i: <V><path d="M3 4l4 1 1-4 2 4M3 7c3 0 5 1 9 1M4 10c3-1 6 0 7 1s1 3-1 4M6 5l1 9" fill="none" stroke="#e8e4e2" strokeWidth="1.500" /></V> },
  { n: "TikTok", i: <V><circle cx="8" cy="8" r="8" fill="#000" /><g color="#fff"><FaTiktok x="3" y="3" /></g></V> },
  { n: "K", i: <V><rect width="16" height="16" rx="2" fill="#f7c9d4" /><rect x="1" y="1" width="14" height="14" fill="#f5184c" /><IconText x="8" y="12.500" fontSize="12" fill="#a3153a" textAnchor="middle">K</IconText></V> },
  { n: "Cubase", bg: "#3b302d", mark: "#4cc2ff", wide: true, i: <CubaseMark /> },
  { n: "Soundpad", i: <V><rect width="16" height="16" rx="1" fill="#ff5a12" /><path stroke="#ffd9c4" strokeWidth="1.400" strokeDasharray="1.500 1" d="M3 6h10M2 8.500h12M2 11h12" /></V> },
  { n: "Calculator", i: <V><rect x="1" width="14" height="16" fill="#2f4a63" /><path fill="#e4eef5" d="M3 2h10v4H3z" /><path stroke="#e4eef5" strokeWidth="2" strokeDasharray="2 1.500" d="M3 9h10M3 12.500h10" /></V> },
  { n: "Shield", i: <V><path fill="#20a08c" d="M0 3l8-3 8 3c0 7-3 11-8 13C3 14 0 10 0 3z" /><path fill="#f1f4f2" d="M3 3l5 1 5 8-3 3C5 13 8 8 3 3z" /><path fill="#c9573c" d="M8 1l7 3c0 3-1 6-2 8z" /></V> },
  { n: "Live", i: <V><rect y="1" x="1" width="14" height="14" fill="#cfe86a" /><IconText x="8" y="10.500" fontSize="6.500" fill="#20240f" textAnchor="middle">Live</IconText></V> },
  { n: "Pitch", i: <V><circle cx="8" cy="8" r="6.500" fill="none" stroke="#ee8133" strokeWidth="2.400" /><path d="M7.500 8.500l6-6" stroke="#ee8133" strokeWidth="2.200" /></V> },
  { n: "Sync", i: <V><circle cx="8" cy="8" r="6.500" fill="none" stroke="#4c9fea" strokeWidth="2.400" /><path d="M8 9V4M8 9l4-2" stroke="#4c9fea" strokeWidth="2" /></V> },
  { n: "Power", i: <V><circle cx="8" cy="8" r="7.300" fill="#7a55c8" /><path fill="#fff" d="M9.500 2.500L4 9h3.200l-1 4.500L12 7H8.700z" /></V> },
  { n: "Robot", i: <V><rect width="16" height="16" fill="#6b6b69" /><path fill="#1d1d1d" d="M2 1h3v6H2zM11 1h3v6h-3zM1 9h4v6H1zM11 9h4v6h-4zM6 5h4v4H6z" /><path fill="#c6c6c4" d="M6 1h4v3H6zM6.500 10h3v5h-3zM7 6h2v2H7z" /></V> },
  { n: "Pads", i: <V><rect width="16" height="16" fill="#231a1c" /><path fill="#d3173c" d="M3 3h4v4H3zM9 3h4v4H9zM3 9h4v4H3zM9 9h4v4H9z" /></V> },
  { n: "Grid", i: <V><rect width="16" height="16" rx="2" fill="#050505" /><path fill="#3c4146" d="M1 1h4v4H1zM11 1h4v4h-4zM1 11h4v4H1zM11 11h4v4h-4z" /><path fill="#f5814d" d="M6 1h4v4H6z" /><path fill="#f05a9c" d="M1 6h4v4H1z" /><path fill="#f4f4f4" d="M6 6h4v4H6z" /><path fill="#4fc6ee" d="M11 6h4v4h-4z" /><path fill="#7be07b" d="M6 11h4v4H6z" /></V> },
  { n: "AI", i: <V><rect x="2" y="2" width="12" height="12" fill="#3a5064" /><IconText x="8" y="11" fontSize="8" fill="#eef2f5" textAnchor="middle">A1</IconText></V> },
  { n: "Sequencer", i: <V><rect width="16" height="16" fill="#1d1416" /><path stroke="#a8183c" strokeWidth="2" d="M3.500 3v10M6.500 3v10M9.500 3v10M12.500 3v10" /></V> },
  { n: "Invader", i: <V><rect width="16" height="16" fill="#fff" /><path fill="#000" d="M3 4h2v2h6V4h2v2h-1v1h2v4h-2V9.500h-1V11H5V9.500H4V11H2V7h2V6H3z" /></V> },
  { n: "Plumber", i: <V><path fill="#d8262c" d="M3 1h8l4 4H2z" /><path fill="#f7d148" d="M7 1h3v2H7z" /><path fill="#f0b48a" d="M4 5h8l3 4-3 5H6L3 10z" /><path fill="#3a1a10" d="M2 5h3v5H2zM8 10h7v2H8zM9 6h1.500v3H9z" /></V> },
  { n: "Pulse", i: <V><path d="M4 6l2 3M7 6l2 3M10 6l2 3" stroke="#ddd" strokeWidth="1.300" /></V> },
  { n: "Blocks", i: <V><path fill="#ff9b33" d="M0 0h16v16H0z" /><path fill="#35a80c" d="M8 7h8v9H8z" /></V> },
];

/* ---------- composed parts ---------- */
type StripData = { name: string; v: string; m: string; top: number; small?: boolean; wrap?: boolean; peak?: number };
type Kind = "in" | "ch" | "out";
const channels: StripData[] = [
  { name: "Starter Melody", v: "-4.54", m: "-oo", top: 27 },
  { name: "Deep Bass", v: "-2.85", m: "-oo", top: 23 },
  { name: "Solo Kicks", v: "-7.37", m: "-oo", top: 33 },
  { name: "FullDrums", v: "-3.24", m: "-oo", top: 24 },
  { name: "Synth Pad Melody", v: "-2.48", m: "-60.4", top: 22, small: true, wrap: true, peak: 2 },
  { name: "HiHats", v: "-6.92", m: "-oo", top: 32 },
  { name: "Claps", v: "-4.36", m: "-oo", top: 27 },
  { name: "Solo Snare", v: "-5.01", m: "-oo", top: 28 },
  { name: "Starter Melody 2", v: "-5.00", m: "-72.4", top: 28, small: true, peak: 2 },
  { name: "Solo Toms", v: "-4.54", m: "-oo", top: 27 },
  { name: "SFX Starter", v: "6.02", m: "-oo", top: 0 },
  { name: "Synth Pad Melody 2", v: "-7.83", m: "-oo", top: 34, small: true, wrap: true },
];

const Gauge = ({ out, peak = 0 }: { out: boolean; peak?: number }) => {
  const bg = out ? "#333535" : "#191d20";
  const marks: [number, string][] = [[11, "6"], [26, "0"], [40, "5"], [50, "10"], [83, "00"]];
  const meter: [number, string][] = [[15, "0"], [34, "12"], [52, "24"], [72, "40"]];
  return (
    <svg width="82" height="94" viewBox="0 0 82 94" aria-hidden>
      <rect x="0.500" y="1.500" width="38" height="91" rx="3" fill={bg} stroke="#14181b" />
      <rect x="43.500" y="1.500" width="38" height="91" rx="3" fill={bg} stroke="#14181b" />
      <rect x="6" y="5" width="2" height="86" fill="#050607" />
      {[11, 26, 40, 50, 60, 66, 74, 78, 83].map((y) => (
        <rect key={y} x="11" y={y} width={y === 26 ? 17 : 16} height="1" fill={y === 26 ? "#8d9298" : "#53585c"} />
      ))}
      {marks.map(([y, t]) => (
        <GaugeText key={t} x="37" y={y + 3} textAnchor="end" fill="#b4b9bd">{t}</GaugeText>
      ))}
      {meter.map(([y, t]) => (
        <g key={t}>
          <rect x="46" y={y} width={y === 15 || y === 52 ? 10 : 7} height="1" fill="#53585c" />
          <rect x="72" y={y} width="8" height="1" fill="#53585c" />
          <GaugeText x="63" y={y + 3} textAnchor="middle" fill="#4b4f52">{t}</GaugeText>
        </g>
      ))}
      {peak > 0 && <rect x="47" y="82" width="15" height="2" fill="#1fc8e6" />}
      {peak > 1 && <rect x="63" y="82" width="15" height="2" fill="#1fc8e6" />}
    </svg>
  );
};

const Strip = ({ d, kind, num, color }: { d: StripData; kind: Kind; num: number; color: string }) => {
  const out = kind === "out";
  const [pos, setPos] = useState(69 - d.top);
  return (
    <Slot $kind={kind}>
      <StripBody>
        <Cells $out={out}>
          <button aria-label="Mute">M</button>
          <button aria-label="Solo">{kind === "in" ? "" : "S"}</button>
          <button aria-label="Listen" />
          <button aria-label="Edit"><Icon n="edit" s={12} /></button>
        </Cells>
        <Pan $out={out} aria-label="Pan">c</Pan>
        <FaderArea>
          <Gauge out={out} peak={d.peak} />
          <Fader $red={kind !== "ch"} type="range" min={0} max={69} value={pos} onChange={(e) => setPos(+e.target.value)} aria-label={`${d.name} volume`} />
        </FaderArea>
        <Values $out={out}>
          <input readOnly value={d.v} aria-label="Volume" />
          <input readOnly value={d.m} aria-label="Peak" />
        </Values>
        <Cells $out={out}>
          <button aria-label="Read">R</button>
          <button aria-label="Write">W</button>
          <button aria-label="Record enable">{kind === "ch" && <Icon n="rec" s={12} h={11} />}</button>
          <button aria-label="Monitor">{kind === "ch" && <Icon n="speaker" s={12} h={11} />}</button>
        </Cells>
        <Rail $on={out || (kind === "ch" && num < 9)} />
        <KindRow $out={out}>
          <Icon n={kind === "in" ? "input" : out ? "output" : "keys"} s={kind === "ch" ? 15 : 12} h={13} />
          {num}
        </KindRow>
        <NamePlate $c={out ? "linear-gradient(#e6e8ea 28px, #5d686f 28px)" : color} $light={kind === "in"} $small={d.small} $wrap={d.wrap}>{d.name}</NamePlate>
      </StripBody>
    </Slot>
  );
};

const Route = ({ kind }: { kind: Kind }) => (
  <Slot $kind={kind}>
    <RouteButton $out={kind === "out"}>Routing<Icon n="route" s={11} h={11} /></RouteButton>
  </Slot>
);

const Locator = ({ icon, value, label, ml }: { icon: string; value: string; label: string; ml?: number }) => (
  <Group $w={150} $ml={ml}>
    <Tool $fix={24} $notch aria-label={`Go to ${label}`}><Icon n={icon} s={icon === "range" ? 22 : 14} h={15} /></Tool>
    <Field readOnly value={value} aria-label={label} />
  </Group>
);
const Tools = ({ list, w, ml }: { list: string[]; w: number; ml?: number }) => (
  <Group $w={w} $ml={ml}>
    {list.map((n) => (
      <Tool key={n} $on={n === "arrow"} $notch={["arrow", "lineTool", "speaker"].includes(n)} aria-label={n}><Icon n={n} s={16} /></Tool>
    ))}
  </Group>
);
const Menu = ({ icon }: { icon: string }) => (
  <>
    <Group $w={44} $dark><Tool aria-label={`${icon} mode`}><Icon n={icon} s={16} /><Icon n="down" s={9} h={10} /></Tool></Group>
    <Dots />
  </>
);

const chips: [string, string, number][] = [
  ["Audio Inputs", "Connected", 151], ["Audio Outputs", "Connected", 160], ["Max. Record Time", "207 hours 58 mins", 214],
  ["Record Format", "48 kHz - 16 bit", 184], ["Project Frame Rate", "30 fps", 157], ["Project Pan Law", "Equal Power", 174],
  ["External Sync", "OFFLINE", 142], ["Buffer Size", "960", 125],
];
const bars = Array.from({ length: 13 }, (_, i) => 1 + i * 16);
const overviewY = (i: number) => Math.floor((i * 4) / 3);
const zoneArt = ["M2 2h3v10H2z", "M2 2h3v10H2z", "M2 9h13v3H2z", "M12 2h3v10h-3z"];

const tileArt: [string, React.ReactNode][] = [
  ["VST Instruments", <svg width="41" height="37" viewBox="0 0 41 37" fill="currentColor"><path d="M0 0h8v21h3v16H0zM16 0h9v21h3v16H13V21h3zM33 0h8v37H30V21h3z" /></svg>],
  ["VST Effects", <FX>FX</FX>],
  ["Loops & Samples", <svg width="43" height="38" viewBox="0 0 43 38" fill="none"><path d="M8 3h15c10 0 17 7 17 15.500S33 35 23 35 9 29 8 20" stroke="currentColor" strokeWidth="5.500" /><path d="M6 10l7 10H0z" fill="currentColor" /><path d="M6 0h10v6h-6z" fill="currentColor" /></svg>],
  ["Presets", <svg width="47" height="40" viewBox="0 0 47 40" fill="currentColor"><path d="M7 1h15l8 13-8 13H7L0 14zM32 21h10l5 9-5 9H32l-5-9z" /></svg>],
  ["User Presets", <svg width="38" height="40" viewBox="0 0 38 40" fill="currentColor"><path d="M7 1h14l7 11c-6 1-9 5-8 10l-3 5H7L0 14z" /><ellipse cx="28" cy="19" rx="6.500" ry="7" /><path d="M18 38c-1-8 3-11 5-11 3 2 7 2 10 0 3 0 6 4 5 11-5 2-15 2-20 0z" /></svg>],
  ["File Browser", <svg width="47" height="36" viewBox="0 0 47 36" fill="none"><path d="M2 2h43q2 0 2 2v12q0 2-2 2H28a10 10 0 0 0-20 0H2q-2 0-2-2V4q0-2 2-2z" fill="currentColor" /><circle cx="35" cy="10" r="2" fill="#3b4750" /><circle cx="42" cy="10" r="2" fill="#3b4750" /><circle cx="18" cy="20" r="6.500" stroke="currentColor" strokeWidth="3.500" /><path d="M22 25l8 9" stroke="currentColor" strokeWidth="4" /></svg>],
  ["Favorites", <svg width="43" height="40" viewBox="0 0 43 40" fill="currentColor"><path d="M21.500 0l6 13.500L43 15 31 25l4 15-13.500-8L8 40l4-15L0 15l15.500-1.500z" /></svg>],
];

export default function CubaseProject() {
  const [query, setQuery] = useState("");
  return (
    <App>
      <Global />
      <TitleBar>
        <Svg $s={16} viewBox="0 0 16 16"><CubaseMark /></Svg>
        <h1>Cubase Elements Project by DJ Kokumo - Cruising On Shemshemat &amp; Acaia</h1>
        <CaptionButton aria-label="Minimize"><svg width="10" height="10"><path d="M0 5.500h10" stroke="#fff" /></svg></CaptionButton>
        <CaptionButton aria-label="Restore"><svg width="10" height="10" fill="none" stroke="#fff"><rect x="0.500" y="2.500" width="7" height="7" rx="1" /><path d="M3 0.500h5q1.500 0 1.500 1.500v5" /></svg></CaptionButton>
        <CaptionButton aria-label="Close"><svg width="10" height="10"><path d="M0 0l10 10M10 0L0 10" stroke="#fff" /></svg></CaptionButton>
      </TitleBar>

      <TopZone>
        <Toolbar>
          <Tools list={["home"]} w={25} ml={0} />
          <Tools list={["undo", "redo"]} w={50} ml={10} />
          <Tools list={["clock"]} w={25} />
          <Tools list={["diamond", "tree", "mixer"]} w={75} ml={10} />
          <Group $w={100}>{["M", "S", "R", "W"].map((t) => <Tool key={t}>{t}</Tool>)}</Group>
          <Group $w={50}><Tool aria-label="Auto-scroll"><Icon n="autoscroll" s={17} /></Tool><Tool $dark aria-label="Auto-scroll options"><Icon n="down" s={9} h={10} /></Tool></Group>
          <Locator icon="locL" value="1.  1.  1.   0" label="Left locator" />
          <Locator icon="locR" value="213.  1.  1.   0" label="Right locator" ml={10} />
          <Tools list={["arrow", "rangesel", "pencil", "eraser", "scissors", "glue", "mute", "zoom", "lineTool", "speaker", "bucket"]} w={275} />
          <Group $w={45} $dark><Tool aria-label="Color"><Icon n="palette" s={16} /><Icon n="down" s={9} h={10} /></Tool></Group>
          <Group $w={287}>
            <Tool $fix={21} $dark aria-label="Link to grid"><Icon n="snapLink" s={14} /></Tool>
            <Pick $pad={3} aria-label="Nudge mode"><option>Link to Grid</option></Pick>
            <PickArrow><Icon n="down" s={9} h={10} /></PickArrow>
            {["nudge1", "nudge2", "left", "right", "nudge3", "nudge4"].map((n) => <Tool key={n} $fix={25} aria-label={n}><Icon n={n} s={15} /></Tool>)}
          </Group>
          <Dots />
          <Group $w={163}>
            <Tool $fix={24} $on aria-label="Snap"><Icon n="snap" s={15} /></Tool>
            <Pick aria-label="Snap type"><option>Grid</option></Pick>
            <PickArrow><Icon n="down" s={9} h={10} /></PickArrow>
            <Tool $fix={25} aria-label="Snap to zero crossing"><Icon n="curve" s={16} /></Tool>
          </Group>
          <Dots />
          <Group $w={138} $dark>
            <Tool $fix={24} aria-label="Grid"><Icon n="hash" s={16} /></Tool>
            <Pick $pad={1} aria-label="Grid type"><option>Bar</option></Pick>
            <PickArrow><Icon n="down" s={9} h={10} /></PickArrow>
          </Group>
          <Group $w={104}>
            <Tool $fix={25} aria-label="Quantize"><Icon n="Q" s={14} h={15} /></Tool>
            <Pick aria-label="Quantize preset"><option>* 1/128&nbsp; 5-le</option></Pick>
          </Group>
          <Tools list={["share"]} w={25} />
          <Tools list={["mixwin"]} w={25} />
          <Group $w={119} $dark>
            {zoneArt.map((d, i) => (
              <Tool key={i} $on aria-label={`Zone ${i + 1}`}>
                <svg width="17" height="14"><path d={i === 0 ? "M9 .5H.5v13H9" : "M.5 .5h16v13H.5z"} fill="none" stroke="#70767b" /><path d={d} fill="#1b2126" /></svg>
              </Tool>
            ))}
            <Tool $fix={18} aria-label="Set up toolbar"><Icon n="setup" s={13} /></Tool>
          </Group>
        </Toolbar>
        <ChipRow>
          {chips.map(([a, b, w]) => <Chip key={a} $w={w}><span>{a}</span><b>{b}</b></Chip>)}
        </ChipRow>
      </TopZone>
      <InfoLine>No Object Selected</InfoLine>
      <Overview>
        <OverviewRange />
        {tracks.flatMap((t, i) => t.clips.map((k) => (
          <OverviewLine key={t.name + k.start} style={{ left: `${(k.start - 1) / 3}%`, width: `${total(k.parts) / 3}%`, top: overviewY(i), background: t.color }} />
        )))}
      </Overview>

      <Workspace>
        <ChannelPanel>Channel</ChannelPanel>
        <Zone>
          <Tabs><Tab $on $w={96}>Inspector</Tab><TabRest /></Tabs>
          <ZoneBody />
          <Tabs $bottom><Tab $on $bottom $w={70}>Track</Tab><Tab $bottom $w={74}>Editor</Tab><TabRest $bottom /></Tabs>
        </Zone>

        <Zone>
          <Project>
            <TrackList>
              <AddGroup><Tool aria-label="Add track"><Icon n="plus" s={13} /></Tool><Tool aria-label="Track presets"><Icon n="preset" s={14} h={13} /></Tool></AddGroup>
              <FolderRow><FolderCell><Icon n="folder" s={14} h={12} /></FolderCell>Input/Output</FolderRow>
              <ul>
                {tracks.map((t, i) => (
                  <Row key={t.name}>
                    <ColorCell $c={t.color} $sel={t.sel}><Icon n="keysDark" s={14} h={14} />{i + 1}</ColorCell>
                    <MS><button>M</button><button>S</button></MS>
                    <TrackName>{t.name}</TrackName>
                  </Row>
                ))}
              </ul>
              <ListFoot><span>Recording</span><Icon n="down" s={12} h={8} /><Icon n="gear" s={12} /></ListFoot>
            </TrackList>
            <Splitter />
            <Timeline>
              <TimeMain>
                <Gutter />
                <Cursor />
                <TimeCanvas>
                  <Ruler><RulerRange style={{ width: len(212) }} /></Ruler>
                  {bars.slice(1).map((b) => <BarLine key={b} style={{ left: at(b) }} />)}
                  <BarLine style={{ left: at(209) }} />
                  {bars.map((b) => <BarLabel key={b} style={{ left: b === 1 ? 0 : at(b) }}>{b}</BarLabel>)}
                  <BarLabel style={{ left: at(209) }}>20<em>9</em></BarLabel>
                  <FolderLane />
                  {tracks.map((t) => (
                    <Lane key={t.name}>
                      {t.clips.map((k) => (
                        <ClipBox key={k.start} $c={t.color} style={{ left: at(k.start), width: `calc(${len(total(k.parts))} + 1px)` }}>
                          {k.parts.map((p, j) => <Part key={j} style={{ flex: `${p} 1 0` }} />)}
                        </ClipBox>
                      ))}
                    </Lane>
                  ))}
                </TimeCanvas>
                <SideTools>
                  <SideButton $h={22} aria-label="Ruler options"><Icon n="down" s={8} h={9} /></SideButton>
                  <SideButton $h={12} aria-label="Edit zoom"><Icon n="pencil" s={8} /></SideButton>
                  <Side $h={48}><VZoom type="range" min={0} max={100} defaultValue={0} aria-label="Waveform zoom" /></Side>
                  <Side><Icon n="chU" s={8} /><Icon n="chD" s={8} /></Side>
                  <SideButton $h={12} aria-label="Zoom presets"><Icon n="down" s={7} /></SideButton>
                  <Side $h={83}><Icon n="minus" s={8} /><VZoom type="range" min={0} max={100} defaultValue={96} aria-label="Vertical zoom" /><Icon n="plus" s={8} /></Side>
                </SideTools>
              </TimeMain>
              <HBarRow>
                <HBar><Icon n="chL" s={10} /><Trough><Thumb $pct={75} /></Trough><Icon n="chR" s={10} /></HBar>
                <ScrollMenu $h={11} aria-label="Zoom menu"><Icon n="down" s={7} h={8} /></ScrollMenu>
                <HZoomBox><Icon n="minus" s={9} /><HZoom type="range" min={0} max={100} defaultValue={6} aria-label="Horizontal zoom" /><Icon n="plus" s={9} /></HZoomBox>
                <ZoomEnd />
              </HBarRow>
            </Timeline>
          </Project>

          <Console>
            <ConsoleHead>
              <span />
              <HeadPart>
                <Group $w={25} $ml={0} $dark><Tool aria-label="Filter channels"><Icon n="filter" s={13} h={15} /></Tool></Group>
                <Group $w={138}>
                  <Tool aria-label="Narrower"><Icon n="shrinkH" s={14} h={12} /></Tool>
                  <Tool aria-label="Wider"><Icon n="growH" s={14} h={12} /></Tool>
                  <Count readOnly value="14" aria-label="Visible channels" />
                  <Tool aria-label="Shorter"><Icon n="shrinkV" s={11} h={12} /></Tool>
                  <Tool aria-label="Taller"><Icon n="growV" s={11} h={13} /></Tool>
                </Group>
              </HeadPart>
              <span />
              <HeadPart>
                <Group $w={25} $dark><Tool aria-label="Settings"><Icon n="gear" s={15} /></Tool></Group>
                <Group $w={50}><Tool $dark aria-label="Set up"><Icon n="setup" s={14} /></Tool><Tool aria-label="Open in window"><Icon n="ne" s={14} /></Tool></Group>
                <TextButton>Q-Link</TextButton>
              </HeadPart>
            </ConsoleHead>
            <ConsoleMain>
              <Strips>
                <StripRow><Route kind="in" /><FirstSep />{channels.map((d) => <Route key={d.name} kind="ch" />)}<Route kind="out" /></StripRow>
                <Divider />
                <StripRow>
                  <Strip kind="in" num={1} color="#5d686f" d={{ name: "Stereo In", v: "-5.01", m: "-69.8", top: 28, peak: 1 }} />
                  <FirstSep />
                  {channels.map((d, i) => <Strip key={d.name} kind="ch" num={i + 1} color={tracks[i].color} d={d} />)}
                  <Strip kind="out" num={1} color="#e6e8ea" d={{ name: "Stereo Out", v: "-6.48", m: "-35.9", top: 31, peak: 2 }} />
                </StripRow>
                <ConsoleScroll><Icon n="chL" s={10} /><Trough $plain><Thumb $pct={57} /></Trough><Icon n="chR" s={10} /></ConsoleScroll>
              </Strips>
              <VBar><Icon n="chU" s={9} /><VTrough><VThumb /></VTrough><Icon n="chD" s={9} /></VBar>
            </ConsoleMain>
          </Console>
          <Tabs $bottom>
            <TabClose aria-label="Close lower zone"><Icon n="close" s={10} h={12} /></TabClose>
            <Tab $on $bottom $w={107}>MixConsole</Tab>
            <Tab $bottom $w={74} $sep>Editor</Tab>
            <Tab $bottom $w={132} $sep>Sampler Control</Tab>
            <Tab $bottom $w={104} $sep>Chord Pads</Tab>
            <Tab $bottom $w={114}>MIDI Remote</Tab>
            <TabRest $bottom />
          </Tabs>
        </Zone>

        <Zone>
          <Tabs><Tab $w={70}>VSTi</Tab><Tab $on $w={80}>Media</Tab><TabRest /></Tabs>
          <MediaBody>
            <SearchRow>
              <SearchBox><Icon n="search" s={12} /><input placeholder="Search" value={query} onChange={(e) => setQuery(e.target.value)} aria-label="Search media" /></SearchBox>
              <ListButton aria-label="Results list"><Icon n="list" s={14} h={12} /></ListButton>
            </SearchRow>
            <CrumbRow><BackButton aria-label="Back"><Icon n="back" s={11} /></BackButton><Icon n="home" s={15} h={14} /></CrumbRow>
            <Tiles>
              {tileArt.map(([label, art]) => <Tile key={label}><TileButton aria-label={label}>{art}</TileButton>{label}</Tile>)}
            </Tiles>
          </MediaBody>
        </Zone>
      </Workspace>

      <Transport>
        <Tools list={["clock"]} w={25} ml={0} />
        <Menu icon="rec" /><Menu icon="wave" /><Menu icon="midi" />
        <Group $w={38}><AQ>AQ</AQ></Group>
        <MeterBox $w={140} $ml={10}><MeterRow $fill={18} /><MeterRow /></MeterBox>
        <MeterBox $w={13} $ml={3}><MeterRow /><MeterRow /></MeterBox>
        <Locator icon="locL" value="1.  1.  1.   0" label="Left locator" ml={14} />
        <Locator icon="locR" value="213.  1.  1.   0" label="Right locator" ml={10} />
        <Locator icon="range" value="212.  0.  0.   0" label="Locator range" />
        <Tools list={["punchIn", "punchOut"]} w={50} />
        <Playback>
          <PlayButton $bg="#8572e3" $fg="#1b1b2c" aria-label="Cycle"><Icon n="loop" s={19} h={16} /></PlayButton>
          <PlayButton $bg="#a0a6a9" $fg="#22272a" aria-label="Stop"><Icon n="stop" s={18} h={16} /></PlayButton>
          <PlayButton aria-label="Play"><Icon n="play" s={18} h={16} /></PlayButton>
          <PlayButton aria-label="Record"><Icon n="ring" s={17} h={16} /></PlayButton>
        </Playback>
        <Dots />
        <Group $w={38}><Tool aria-label="Pre-roll"><Icon n="moon" s={16} /></Tool></Group>
        <Group $w={150} $dark><Tool $fix={24} aria-label="Time format"><Icon n="note" s={13} h={15} /></Tool><Field readOnly value="1.  1.  1.   0" aria-label="Position" /></Group>
        <Dots />
        <Group $w={119}>{[1, 2, 3, 4].map((n) => <Marker key={n}><span>{n}</span></Marker>)}<Seam /><Tool $fix={18} aria-label="Edit markers"><Icon n="edit" s={14} /></Tool></Group>
        <Dots />
        <Tools list={["pre", "count"]} w={50} />
        <Dots />
        <Group $w={111} $ml={6}><Tool $fix={24} $on aria-label="Tempo track"><Icon n="tempo" s={14} /></Tool><Tempo readOnly value="120.000" aria-label="Tempo" /><PickArrow><Icon n="updown" s={10} h={14} /></PickArrow><Seam /><Pad /></Group>
        <Group $w={43}><Tool aria-label="Click"><Icon n="click" s={14} /></Tool><Seam /><Tool $fix={18} aria-label="Click setup"><Icon n="gear" s={12} /></Tool></Group>
        <Group $w={43} $ml={6}><Tool aria-label="Metronome"><Icon n="metro" s={14} /></Tool><Seam /><Tool $fix={18} aria-label="Metronome setup"><Icon n="gear" s={12} /></Tool></Group>
        <Dots />
        <Group $w={142} $ml={6} $dark><OutLevel>-6.48<Icon n="tri" s={9} h={10} /></OutLevel></Group>
        <Dots />
      </Transport>

      <Taskbar>
        {tasks.map((t) => <TaskItem key={t.n} aria-label={t.n} $bg={t.bg} $mark={t.mark} $wide={t.wide} $long={t.long}>{t.i}</TaskItem>)}
        <Tray>
          <svg width="12" height="8" fill="none" stroke="#fff" strokeWidth="1.600"><path d="M1 7l5-5 5 5" /></svg>
          <svg width="17" height="17" viewBox="0 0 17 17" fill="none" stroke="#fff" strokeWidth="1.300"><circle cx="7.500" cy="7.500" r="6.500" /><path d="M4.500 9c1 2 4 2.500 5 1" /><circle cx="5.500" cy="5.500" r=".6" fill="#fff" /><circle cx="9.500" cy="5.500" r=".6" fill="#fff" /><circle cx="12.500" cy="12.500" r="4" fill="#fff" /><path d="M12.500 10.500v4M10.500 12.500h4" stroke="#222" /></svg>
          <TrayPair>
            <svg width="16" height="14" viewBox="0 0 16 14" fill="none" stroke="#fff" strokeWidth="1.300"><path d="M.7 5a10.500 10.500 0 0 1 14.600 0M3 7.800a7 7 0 0 1 10 0M5.300 10.300a4 4 0 0 1 5.400 0" /><circle cx="8" cy="12.500" r="1" fill="#fff" /></svg>
            <svg width="17" height="14" viewBox="0 0 17 14" fill="none" stroke="#fff" strokeWidth="1.200"><path d="M1 5v4h2.500L7 12.500v-11L3.500 5zM9.500 5c1 1 1 3 0 4M11.500 3c2 2 2 6 0 8M13.500 1c3 3 3 9 0 12" /></svg>
          </TrayPair>
          <p>10:53 PM<br />6/21/2026</p>
        </Tray>
      </Taskbar>
    </App>
  );
}
